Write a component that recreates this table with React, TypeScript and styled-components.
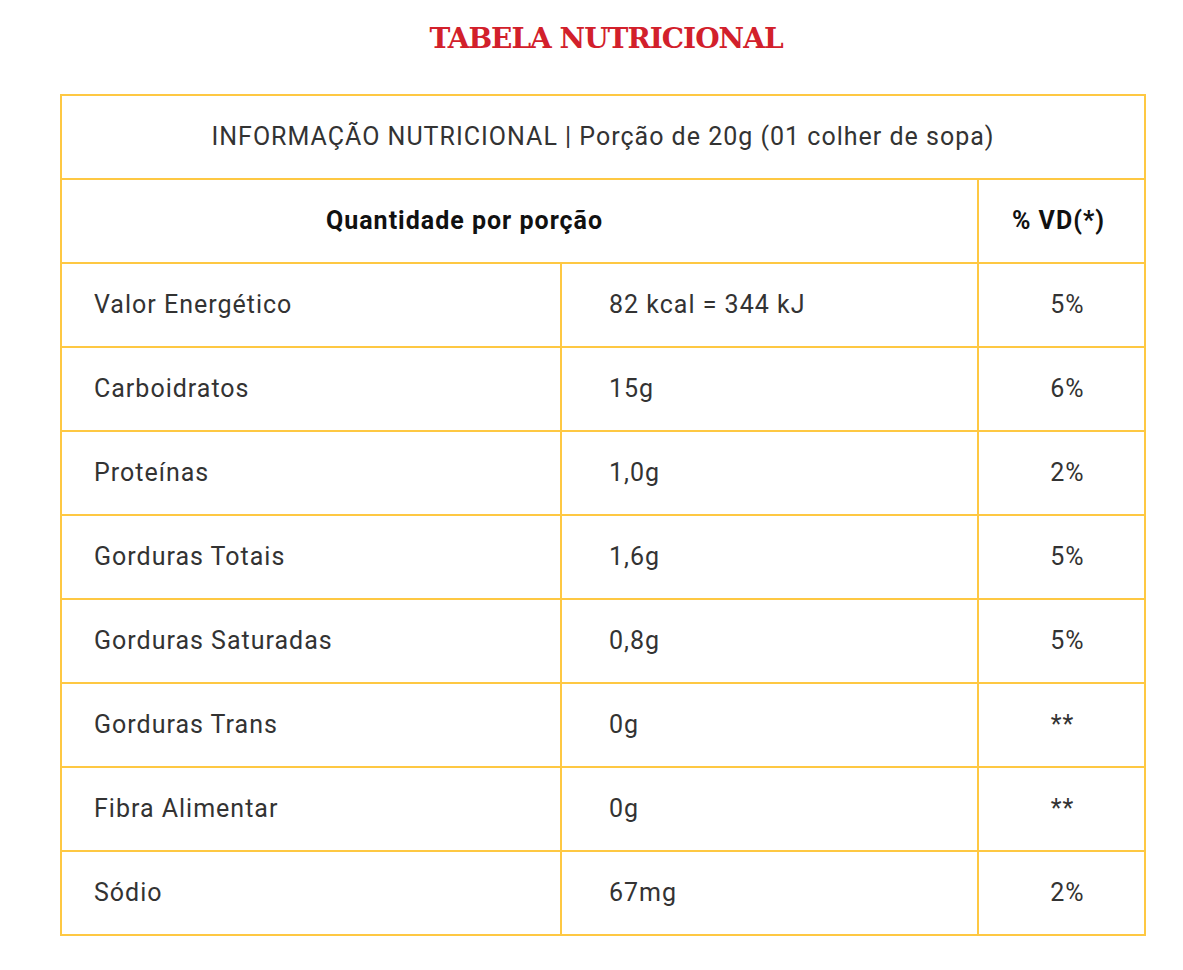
import React from "react";
import styled, { createGlobalStyle } from "styled-components";

const Global = createGlobalStyle`
  html, body { margin: 0; padding: 0; background: #ffffff; }
  body { font-family: Roboto, "Liberation Sans", sans-serif; color: #333333; }
`;

const Page = styled.div`
  width: 1183px;
  padding-top: 19px;
  box-sizing: border-box;
`;

const Title = styled.h1`
  margin: 0 0 0 60px;
  width: 1092px;
  text-align: center;
  font-family: "DejaVu Serif", "Liberation Serif", serif;
  font-weight: 700;
  font-size: 28px;
  line-height: 40px;
  letter-spacing: -1px;
  color: #d2202b;
`;

const Grid = styled.div`
  margin: 35px 0 0 60px;
  width: 1086px;
  box-sizing: border-box;
  padding: 2px;
  background: #fec843;
  display: grid;
  grid-template-columns: 498px 415px 165px;
  grid-auto-rows: 82px;
  gap: 2px;
`;

const Cell = styled.div<{ $span?: number; $align?: "left" | "center"; $pl?: number; $pr?: number; $bold?: boolean }>`
  background: #ffffff;
  grid-column: span ${(p) => p.$span ?? 1};
  display: flex;
  align-items: center;
  justify-content: ${(p) => (p.$align === "center" ? "center" : "flex-start")};
  padding-left: ${(p) => p.$pl ?? 0}px;
  padding-right: ${(p) => p.$pr ?? 0}px;
  padding-bottom: 1px;
  box-sizing: border-box;
  font-size: 25px;
  letter-spacing: 1px;
  font-weight: ${(p) => (p.$bold ? 700 : 400)};
  color: ${(p) => (p.$bold ? "#111111" : "#333333")};
  white-space: nowrap;
`;

const rows: [string, string, string][] = [
  ["Valor Energético", "82 kcal = 344 kJ", "5%"],
  ["Carboidratos", "15g", "6%"],
  ["Proteínas", "1,0g", "2%"],
  ["Gorduras Totais", "1,6g", "5%"],
  ["Gorduras Saturadas", "0,8g", "5%"],
  ["Gorduras Trans", "0g", "**"],
  ["Fibra Alimentar", "0g", "**"],
  ["Sódio", "67mg", "2%"],
];

export default function App() {
  return (
    <Page>
      <Global />
      <Title>TABELA NUTRICIONAL</Title>
      <Grid>
        <Cell $span={3} $align="center">
          INFORMAÇÃO NUTRICIONAL | Porção de 20g (01 colher de sopa)
        </Cell>
        <Cell $span={2} $pl={264} $bold>
          Quantidade por porção
        </Cell>
        <Cell $align="center" $pr={6} $bold>
          % VD(*)
        </Cell>
        {rows.map(([a, b, c]) => (
          <React.Fragment key={a}>
            <Cell $pl={32}>{a}</Cell>
            <Cell $pl={47}>{b}</Cell>
            <Cell $align="center" $pl={c === "**" ? 2 : 12}>
              {c}
            </Cell>
          </React.Fragment>
        ))}
      </Grid>
    </Page>
  );
}
